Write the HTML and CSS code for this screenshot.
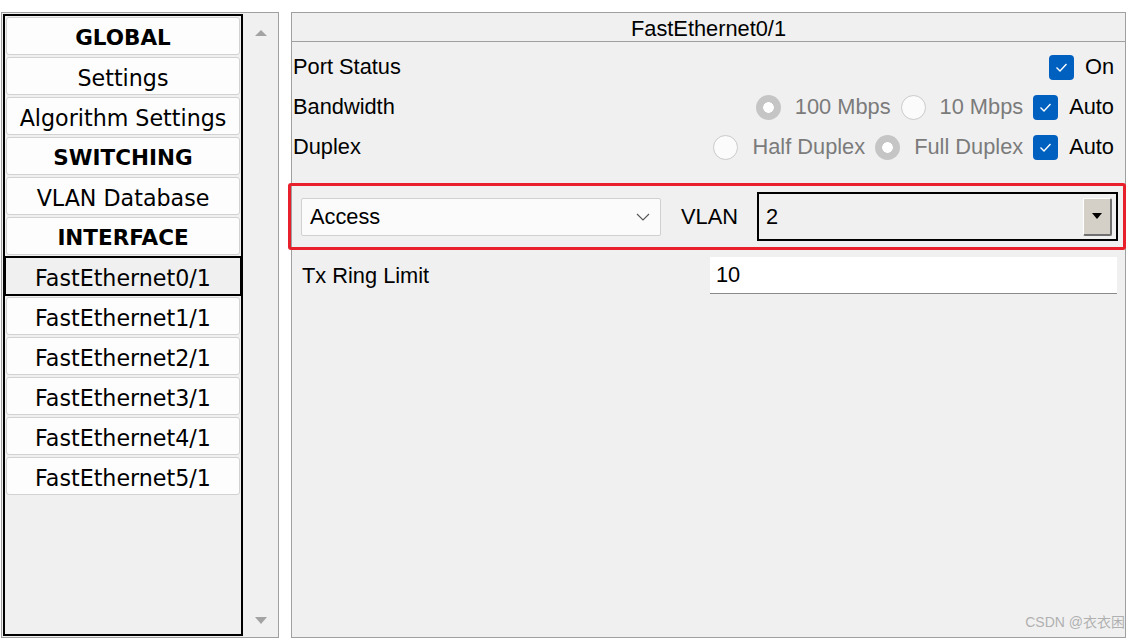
FILE: index.html
```html
<!DOCTYPE html>
<html>
<head>
<meta charset="utf-8">
<link rel="stylesheet" href="styles.css">
</head>
<body>
<div class="app">
  <div class="sidebar">
    <div class="list">
      <div class="item head">GLOBAL</div>
      <div class="item">Settings</div>
      <div class="item">Algorithm Settings</div>
      <div class="item head">SWITCHING</div>
      <div class="item">VLAN Database</div>
      <div class="item head">INTERFACE</div>
      <div class="item selected">FastEthernet0/1</div>
      <div class="item">FastEthernet1/1</div>
      <div class="item">FastEthernet2/1</div>
      <div class="item">FastEthernet3/1</div>
      <div class="item">FastEthernet4/1</div>
      <div class="item">FastEthernet5/1</div>
    </div>
    <div class="scrollbar">
      <span class="arrow up"></span>
      <span class="arrow down"></span>
    </div>
  </div>

  <div class="panel">
    <div class="title">FastEthernet0/1</div>
    <div class="rows">
      <div class="row">
        <span class="label">Port Status</span>
        <div class="opts">
          <span class="opt cb"><span class="check"><svg viewBox="0 0 25 25" width="25" height="25"><polyline points="7.5,12.5 11,16 17.5,9" fill="none" stroke="#fff" stroke-width="1.4"/></svg></span><span class="txt">On</span></span>
        </div>
      </div>
      <div class="row">
        <span class="label">Bandwidth</span>
        <div class="opts">
          <span class="opt"><span class="radio on"></span><span class="txt dis">100 Mbps</span></span>
          <span class="opt"><span class="radio"></span><span class="txt dis">10 Mbps</span></span>
          <span class="opt cb"><span class="check"><svg viewBox="0 0 25 25" width="25" height="25"><polyline points="7.5,12.5 11,16 17.5,9" fill="none" stroke="#fff" stroke-width="1.4"/></svg></span><span class="txt">Auto</span></span>
        </div>
      </div>
      <div class="row">
        <span class="label">Duplex</span>
        <div class="opts">
          <span class="opt"><span class="radio"></span><span class="txt dis">Half Duplex</span></span>
          <span class="opt"><span class="radio on"></span><span class="txt dis">Full Duplex</span></span>
          <span class="opt cb"><span class="check"><svg viewBox="0 0 25 25" width="25" height="25"><polyline points="7.5,12.5 11,16 17.5,9" fill="none" stroke="#fff" stroke-width="1.4"/></svg></span><span class="txt">Auto</span></span>
        </div>
      </div>
    </div>

    <div class="highlight">
      <div class="select">
        <span>Access</span>
        <svg class="chev" viewBox="0 0 14 8" width="14" height="8"><polyline points="1,1 7,7 13,1" fill="none" stroke="#555" stroke-width="1.1"/></svg>
      </div>
      <span class="vlan-label">VLAN</span>
      <div class="combo">
        <span>2</span>
        <span class="combo-btn"><span class="tri"></span></span>
      </div>
    </div>

    <div class="tx">
      <span class="tx-label">Tx Ring Limit</span>
      <div class="input">10</div>
    </div>

    <div class="watermark">CSDN @衣衣困</div>
  </div>
</div>
</body>
</html>
```

FILE: styles.css
```css
html, body {
  margin: 0;
  padding: 0;
  background: #ffffff;
}

.app {
  display: flex;
  align-items: flex-start;
  padding-top: 12px;
  width: 1141px;
  height: 641px;
  box-sizing: border-box;
}

.sidebar {
  margin-left: 1px;
  width: 278px;
  height: 626px;
  box-sizing: border-box;
  border: 1px solid #a0a0a0;
  background: #f0f0f0;
  display: flex;
}

.list {
  margin: 1px 0 0 1px;
  width: 240px;
  height: 622px;
  box-sizing: border-box;
  border: 2px solid #000;
  padding: 1px;
  display: flex;
  flex-direction: column;
}

.item {
  height: 38px;
  margin-bottom: 2px;
  padding-top: 3px;
  box-sizing: border-box;
  background: #fdfdfd;
  border: 1px solid #d2d2d2;
  border-radius: 3px;
  display: flex;
  align-items: center;
  justify-content: center;
  font-family: "DejaVu Sans", Verdana, sans-serif;
  font-size: 22.2px;
  color: #000;
  white-space: nowrap;
}

.item.head {
  font-weight: bold;
  font-size: 21.5px;
}

.item.selected {
  margin: -1px -2px 1px -2px;
  height: 40px;
  border: 2px solid #000;
  border-radius: 0;
  background: #f0f0f0;
}

.scrollbar {
  width: 35px;
  display: flex;
  flex-direction: column;
  justify-content: space-between;
  align-items: center;
  padding: 17px 0 13px;
  box-sizing: border-box;
}

.arrow {
  width: 0;
  height: 0;
  border-left: 6px solid transparent;
  border-right: 6px solid transparent;
}

.arrow.up {
  border-bottom: 6px solid #a3a3a3;
}

.arrow.down {
  border-top: 7px solid #a3a3a3;
}

.panel {
  position: relative;
  margin-left: 12px;
  width: 835px;
  height: 626px;
  box-sizing: border-box;
  border: 1px solid #a0a0a0;
  background: #f0f0f0;
  font-family: "Liberation Sans", Arial, sans-serif;
  font-size: 21.8px;
  color: #000;
}

.title {
  height: 27px;
  padding-top: 1px;
  border-bottom: 1px solid #a0a0a0;
  text-align: center;
  line-height: 29px;
}

.rows {
  padding: 5px 11px 0 1px;
}

.row {
  height: 40px;
  display: flex;
  align-items: center;
  justify-content: space-between;
}

.opts {
  display: flex;
  align-items: center;
  gap: 10px;
}

.opt {
  display: flex;
  align-items: center;
  gap: 14px;
}

.opt.cb {
  gap: 11px;
}

.txt.dis {
  color: #7b7b7b;
}

.check {
  width: 25px;
  height: 25px;
  border-radius: 4px;
  background: #0060c0;
  display: block;
}

.check svg {
  display: block;
}

.radio {
  width: 25px;
  height: 25px;
  box-sizing: border-box;
  border-radius: 50%;
  border: 1.5px solid #cacaca;
  background: #fbfbfb;
  display: block;
}

.radio.on {
  border: none;
  background: radial-gradient(circle, #ffffff 0 5px, #c5c5c5 5.6px);
}

.highlight {
  margin: 16px -1px 0 -4px;
  height: 67px;
  box-sizing: border-box;
  border: 3px solid #e8202b;
  border-radius: 3px;
  display: flex;
  align-items: center;
  padding: 0 5px 0 10px;
}

.select {
  width: 360px;
  height: 38px;
  box-sizing: border-box;
  background: #fbfbfb;
  border: 1px solid #d0d0d0;
  border-radius: 2px;
  display: flex;
  align-items: center;
  justify-content: space-between;
  padding: 0 10px 0 8px;
}

.chev {
  display: block;
}

.vlan-label {
  margin-left: 20px;
}

.combo {
  margin-left: 19px;
  flex: 1;
  height: 49px;
  box-sizing: border-box;
  border: 2px solid #000;
  background: #f0f0f0;
  display: flex;
  align-items: center;
  justify-content: space-between;
  padding: 0 4px 0 7px;
}

.combo-btn {
  width: 29px;
  height: 38px;
  box-sizing: border-box;
  background: #d4d0c8;
  border-top: 1px solid #ffffff;
  border-left: 1px solid #ffffff;
  border-right: 2px solid #707070;
  border-bottom: 2px solid #707070;
  border-radius: 2px;
  display: flex;
  align-items: center;
  justify-content: center;
}

.tri {
  width: 0;
  height: 0;
  border-left: 5px solid transparent;
  border-right: 5px solid transparent;
  border-top: 6px solid #000;
}

.tx {
  display: grid;
  grid-template-columns: 408px 1fr;
  align-items: center;
  margin-top: 7px;
  padding: 0 8px 0 10px;
}

.input {
  height: 37px;
  box-sizing: border-box;
  background: #ffffff;
  border-bottom: 1px solid #8a8a8a;
  display: flex;
  align-items: center;
  padding-left: 6px;
}

.watermark {
  position: absolute;
  right: 0;
  bottom: 6px;
  font-family: "Liberation Sans", Arial, "Noto Sans CJK SC", sans-serif;
  font-size: 14px;
  color: #b0b0b0;
  white-space: nowrap;
}
```
